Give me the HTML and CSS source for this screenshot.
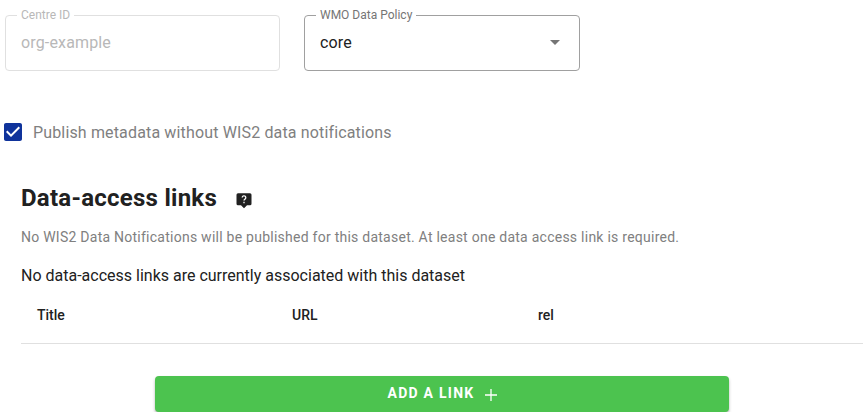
FILE: index.html
```html
<!DOCTYPE html>
<html lang="en">
<head>
    <meta charset="UTF-8">
    <title>Data-access links</title>
    <link rel="stylesheet" href="styles.css">
</head>
<body>

    <!-- Top fields -->
    <div class="field-row">
        <fieldset class="field field-disabled">
            <legend>Centre ID</legend>
            <span class="field-value">org-example</span>
        </fieldset>
        <fieldset class="field field-select">
            <legend>WMO Data Policy</legend>
            <span class="field-value">core</span>
            <span class="caret"></span>
        </fieldset>
    </div>

    <!-- Checkbox -->
    <div class="check-row">
        <svg class="check-box" viewBox="3 3 18 18" width="18" height="18">
            <path d="M19 3H5c-1.11 0-2 .9-2 2v14c0 1.1.89 2 2 2h14c1.11 0 2-.9 2-2V5c0-1.1-.89-2-2-2zm-9 14l-5-5 1.41-1.41L10 14.17l7.59-7.59L19 8l-9 9z" fill="#0f339b"/>
        </svg>
        <span class="check-label">Publish metadata without WIS2 data notifications</span>
    </div>

    <!-- Links section -->
    <div class="links">
        <div class="links-head">
            <h2>Data-access links</h2>
            <svg class="help-icon" viewBox="0 0 24 24" width="20" height="20">
                <path d="M4 3h16a2 2 0 0 1 2 2v12a2 2 0 0 1-2 2h-4l-4 4-4-4H4a2 2 0 0 1-2-2V5a2 2 0 0 1 2-2z" fill="#212121"/>
                <path d="M9.6 8.8a2.4 2.4 0 1 1 3.7 2c-.9.6-1.3 1-1.3 2M12 14.4v1.8" fill="none" stroke="#fff" stroke-width="1.7"/>
            </svg>
        </div>
        <p class="links-note">No WIS2 Data Notifications will be published for this dataset. At least one data access link is required.</p>
        <p class="links-empty">No data-access links are currently associated with this dataset</p>
        <div class="links-table">
            <span>Title</span>
            <span>URL</span>
            <span>rel</span>
        </div>
    </div>

    <div class="add-row">
        <button class="add-btn">
            <span>ADD A LINK</span>
            <svg class="plus" viewBox="0 0 12 12" width="12" height="12"><path d="M6 0v12M0 6h12" fill="none" stroke="#fff" stroke-width="1.3"/></svg>
        </button>
    </div>

</body>
</html>
```
FILE: styles.css
```css
body {
    font-family: Roboto, 'Liberation Sans', sans-serif;
    margin: 0;
    padding: 0;
    color: #212121;
    background-color: #ffffff;
    overflow: hidden;
}

/* Top fields */
.field-row {
    display: flex;
    gap: 24px;
    padding: 9px 0 0 5px;
}

.field {
    box-sizing: border-box;
    width: 275px;
    height: 62px;
    margin: 0;
    padding: 0 15px;
    border: 1px solid #a0a0a0;
    border-radius: 4px;
    display: flex;
    align-items: center;
    justify-content: space-between;
    font-size: 16px;
    position: relative;
}

.field legend {
    font-size: 12px;
    line-height: 12px;
    padding: 0 4px;
    margin-left: -4px;
    color: #757575;
}

.field-value {
    position: relative;
    top: -3px;
    letter-spacing: 0.15px;
}

.field-disabled {
    border-color: #e0e0e0;
}

.field-disabled legend,
.field-disabled .field-value {
    color: #b8b8b8;
}

.field-select {
    width: 276px;
}

.caret {
    position: relative;
    top: -3px;
    right: 4px;
    width: 0;
    height: 0;
    border-left: 5px solid transparent;
    border-right: 5px solid transparent;
    border-top: 5px solid #757575;
}

/* Checkbox */
.check-row {
    display: flex;
    align-items: center;
    margin-top: 49px;
    padding-left: 4px;
    height: 24px;
}

.check-box {
    margin-right: 11px;
}

.check-label {
    font-size: 16px;
    color: #808080;
    letter-spacing: 0.15px;
}

/* Links section */
.links {
    padding: 0 2px 0 21px;
}

.links-head {
    display: flex;
    align-items: center;
    margin-top: 38px;
    height: 32px;
}

.links-head h2 {
    margin: 0;
    font-size: 24px;
    font-weight: 700;
    letter-spacing: 0.26px;
}

.help-icon {
    margin-left: 18px;
    width: 18px;
    height: 18px;
    position: relative;
    top: 2px;
}

.links-note {
    margin: 13px 0 0;
    font-size: 14px;
    line-height: 20px;
    color: #808080;
    letter-spacing: 0.25px;
}

.links-empty {
    margin: 19px 0 0;
    font-size: 16px;
    line-height: 20px;
}

.links-table {
    display: grid;
    grid-template-columns: 255px 246px 1fr;
    margin-top: 19px;
    padding: 0 16px;
    height: 38px;
    border-bottom: 1px solid #e0e0e0;
    font-size: 14px;
    font-weight: 500;
    line-height: 20px;
}

/* Add button */
.add-row {
    padding: 32px 0 0 155px;
}

.add-btn {
    display: flex;
    align-items: center;
    justify-content: center;
    gap: 11px;
    width: 574px;
    height: 36px;
    padding: 0 0 2px 1px;
    border: 0;
    border-radius: 4px;
    background-color: #4cc34f;
    color: #fff;
    font-family: inherit;
    font-size: 14px;
    font-weight: 700;
    letter-spacing: 1.25px;
    box-shadow: 0 2px 3px rgba(0, 0, 0, 0.3);
}

.plus {
    position: relative;
    top: 2px;
}
```
